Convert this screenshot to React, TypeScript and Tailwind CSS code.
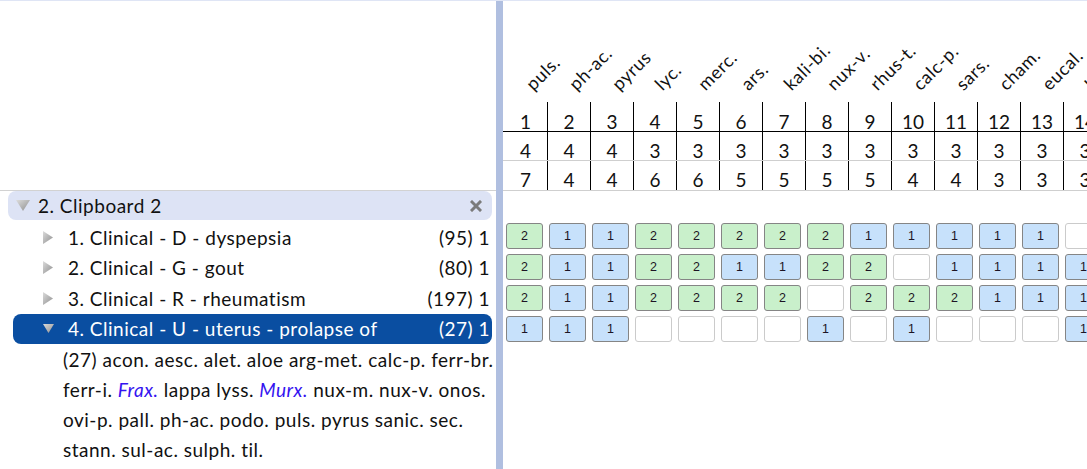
const labels = ['puls.', 'ph-ac.', 'pyrus', 'lyc.', 'merc.', 'ars.', 'kali-bi.', 'nux-v.', 'rhus-t.', 'calc-p.', 'sars.', 'cham.', 'eucal.', 'lyss.'];
const rowB = [4, 4, 4, 3, 3, 3, 3, 3, 3, 3, 3, 3, 3, 3];
const rowC = [7, 4, 4, 6, 6, 5, 5, 5, 5, 4, 4, 3, 3, 3];

const grid = [
  [2, 1, 1, 2, 2, 2, 2, 2, 1, 1, 1, 1, 1, 0],
  [2, 1, 1, 2, 2, 1, 1, 2, 2, 0, 1, 1, 1, 1],
  [2, 1, 1, 2, 2, 2, 2, 0, 2, 2, 2, 1, 1, 1],
  [1, 1, 1, 0, 0, 0, 0, 1, 0, 1, 0, 0, 0, 1],
];

const rubrics = [
  { title: '1. Clinical - D - dyspepsia', count: '(95) 1' },
  { title: '2. Clinical - G - gout', count: '(80) 1' },
  { title: '3. Clinical - R - rheumatism', count: '(197) 1' },
  { title: '4. Clinical - U - uterus - prolapse of', count: '(27) 1', open: true },
];

const Tri = ({ down, w, h }: { down?: boolean; w: number; h: number }) => (
  <svg width={w} height={h} viewBox={`0 0 ${w} ${h}`}>
    <defs>
      <linearGradient id="tg" x1="0" y1="0" x2="1" y2="1">
        <stop offset="0" stopColor="#dcdcdc" />
        <stop offset="1" stopColor="#8e8e8e" />
      </linearGradient>
    </defs>
    {down ? (
      <polygon points={`0,0 ${w},0 ${w / 2},${h}`} fill="url(#tg)" />
    ) : (
      <polygon points={`0,0 ${w},${h / 2} 0,${h}`} fill="url(#tg)" />
    )}
  </svg>
);

const Cell = ({ v }: { v: number }) => {
  const cls =
    v === 2
      ? 'bg-[#c9f0cb] border-[#858585]'
      : v === 1
      ? 'bg-[#c7e1fb] border-[#858585]'
      : 'bg-white border-[#cbcbcb]';
  return (
    <div className="w-[43px] shrink-0 flex">
      <div
        className={`ml-[2px] w-[37px] h-[26px] rounded-[3px] border flex items-center justify-center text-[12.5px] tracking-normal text-[#1c1424] font-['Liberation_Sans',Arial,sans-serif] ${cls}`}
      >
        {v ? v : ''}
      </div>
    </div>
  );
};

export default function App() {
  return (
    <div className="w-[1087px] h-[469px] overflow-hidden bg-white border-t border-[#dfe5f5] flex font-['Lato',sans-serif] text-[19px] tracking-[0.5px] text-[#111]">
      {/* Left: clipboards tree */}
      <div className="w-[496px] shrink-0 overflow-hidden">
        <div className="h-[190px] border-b border-[#d2d2d2]" />
        <div className="ml-[8px] mr-[4px] h-[29px] rounded-[8px] bg-[#dde3f5] flex items-center pl-[8px] pr-[10px]">
          <Tri down w={14} h={11} />
          <span className="ml-[8px] leading-none">2. Clipboard 2</span>
          <svg className="ml-auto" width="12" height="12" viewBox="0 0 12 12">
            <path d="M2 2 L10 10 M10 2 L2 10" stroke="#7b7b7b" strokeWidth="3" strokeLinecap="square" />
          </svg>
        </div>
        <div className="mt-[2px]">
          {rubrics.map((r) => (
            <div
              key={r.title}
              className={`ml-[13px] w-[479px] h-[30.5px] rounded-[8px] flex items-center pl-[30px] pr-[2px] ${
                r.open ? 'bg-[#0a4ea1] text-white' : ''
              }`}
            >
              <div className="w-[25px] flex">
                {r.open ? <Tri down w={11} h={9} /> : <Tri w={10} h={13} />}
              </div>
              <span className="leading-none">{r.title}</span>
              <span className="ml-auto leading-none">{r.count}</span>
            </div>
          ))}
        </div>
        <div className="pl-[63px] leading-[30px] whitespace-nowrap mt-[1px]">
          <div>(27) acon. aesc. alet. aloe arg-met. calc-p. ferr-br.</div>
          <div>
            ferr-i. <i className="text-[#3414f0]">Frax.</i> lappa lyss. <i className="text-[#3414f0]">Murx.</i> nux-m. nux-v. onos.
          </div>
          <div>ovi-p. pall. ph-ac. podo. puls. pyrus sanic. sec.</div>
          <div>stann. sul-ac. sulph. til.</div>
        </div>
      </div>

      {/* Splitter */}
      <div className="w-[7px] shrink-0 bg-[#b0bfe0]" />

      {/* Right: repertorisation table */}
      <div className="flex-1 overflow-hidden text-[19px] tracking-normal">
        <div className="h-[101px] flex pl-[1px]">
          {labels.map((l) => (
            <div key={l} className="w-[43px] shrink-0 relative">
              <span className="absolute left-[31px] bottom-[9px] origin-bottom-left -rotate-45 text-[18px] tracking-[0.6px] leading-none whitespace-nowrap">
                {l}
              </span>
            </div>
          ))}
        </div>
        <div className="h-[30px] flex pl-[1px] border-b border-black">
          {labels.map((l, i) => (
            <div key={l} className={`w-[43px] shrink-0 flex items-end justify-center leading-none ${i ? 'border-l border-black' : ''}`}>
              {i + 1}
            </div>
          ))}
        </div>
        <div className="h-[29px] flex pl-[1px] border-b border-[#cfcfcf]">
          {rowB.map((n, i) => (
            <div key={i} className={`w-[43px] shrink-0 flex items-end justify-center leading-none ${i ? 'border-l border-black' : ''}`}>
              {n}
            </div>
          ))}
        </div>
        <div className="h-[30px] flex pl-[1px] border-b border-[#cfcfcf]">
          {rowC.map((n, i) => (
            <div key={i} className={`w-[43px] shrink-0 flex items-end justify-center leading-none pb-[1px] ${i ? 'border-l border-black' : ''}`}>
              {n}
            </div>
          ))}
        </div>
        <div className="mt-[32px] flex flex-col gap-[5px] pl-[1px]">
          {grid.map((row, r) => (
            <div key={r} className="flex">
              {row.map((v, i) => (
                <Cell key={i} v={v} />
              ))}
            </div>
          ))}
        </div>
      </div>
    </div>
  );
}
